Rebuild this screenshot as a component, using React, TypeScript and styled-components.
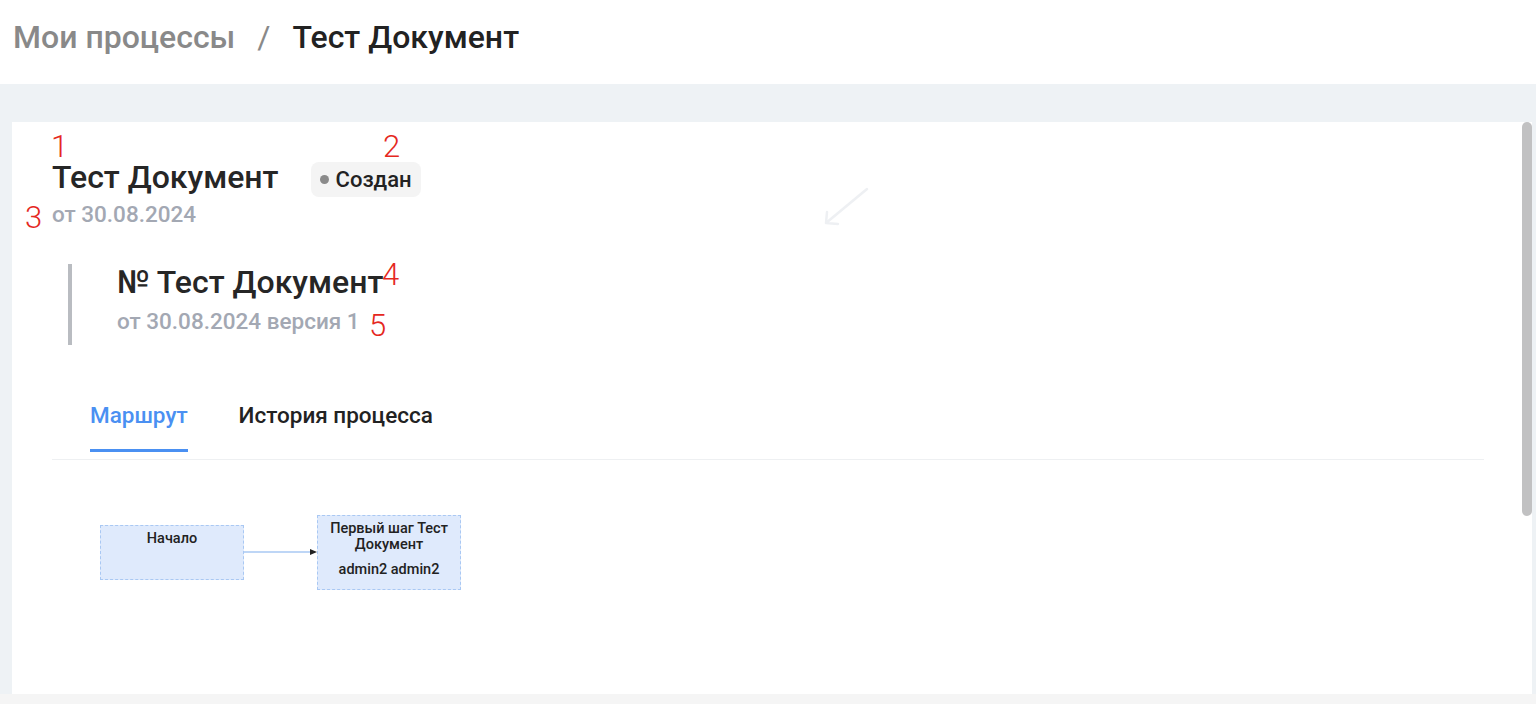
import * as React from 'react'
import styled, { createGlobalStyle } from 'styled-components'

const GlobalStyle = createGlobalStyle`
  html, body {
    margin: 0;
    padding: 0;
    height: 100%;
    overflow: hidden;
  }
  body {
    font-family: Roboto, 'Noto Sans', sans-serif;
    background: #ffffff;
    color: #222222;
  }
`

const Page = styled.div`
  display: flex;
  flex-direction: column;
  height: 704px;
  width: 1536px;
`

const Header = styled.header`
  height: 84px;
  flex-shrink: 0;
  background: #ffffff;
  display: flex;
  align-items: flex-start;
  padding: 18px 0 0 13px;
  box-sizing: border-box;
  font-size: 32px;
  line-height: 38px;
  font-weight: 500;
`

const Crumb = styled.span<{ $current?: boolean }>`
  color: ${(p) => (p.$current ? '#222222' : '#898989')};
`

const Slash = styled.span`
  color: #898989;
  margin: 0 22px;
  font-weight: 400;
`

const Main = styled.main`
  flex: 1;
  background: #eef2f5;
  padding: 38px 4px 0 12px;
  display: flex;
  min-height: 0;
`

const BottomStrip = styled.div`
  height: 10px;
  flex-shrink: 0;
  background: #f5f5f5;
`

const Card = styled.section`
  position: relative;
  flex: 1;
  background: #ffffff;
  padding: 37px 48px 0 40px;
  overflow: hidden;
`

const Scrollbar = styled.div`
  position: absolute;
  top: 0;
  right: 0;
  width: 10px;
  height: 394px;
  border-radius: 5px;
  background: #c1c1c2;
`

const Note = styled.span<{ $x: number; $y: number }>`
  position: absolute;
  left: ${(p) => p.$x}px;
  top: ${(p) => p.$y}px;
  font-size: 31px;
  line-height: 31px;
  font-weight: 300;
  color: #e5281e;
`

const GhostArrow = styled.svg`
  position: absolute;
  left: 799px;
  top: 64px;
`

const TitleRow = styled.div`
  display: flex;
  align-items: center;
  gap: 32px;
  height: 36px;
`

const Title = styled.h1`
  margin: 0;
  font-size: 32px;
  line-height: 36px;
  font-weight: 500;
  color: #262626;
`

const Badge = styled.span`
  display: inline-flex;
  align-items: center;
  gap: 7px;
  height: 35px;
  margin-top: 4px;
  padding: 0 9px;
  border-radius: 8px;
  background: #f4f4f4;
  font-size: 22px;
  font-weight: 500;
  color: #222222;
`

const Dot = styled.span`
  width: 9px;
  height: 9px;
  border-radius: 50%;
  background: #8a8a8a;
`

const Sub = styled.div<{ $gap?: number }>`
  margin-top: ${(p) => p.$gap ?? 0}px;
  font-size: 22.5px;
  line-height: 26px;
  font-weight: 500;
  color: #a3a8b3;
`

const DocBlock = styled.div`
  margin: 38px 0 0 16px;
  border-left: 4px solid #b9bcc1;
  padding: 0 0 0 45px;
  height: 81px;
  box-sizing: border-box;
`

const DocTitle = styled.h2`
  margin: -1px 0 0;
  font-size: 32px;
  line-height: 36px;
  font-weight: 500;
  color: #262626;
`

const Tabs = styled.nav`
  display: flex;
  gap: 51px;
  margin-top: 57px;
  padding-left: 38px;
  border-bottom: 1px solid #eef0f2;
`

const Tab = styled.div<{ $active?: boolean }>`
  font-size: 22.5px;
  line-height: 27px;
  font-weight: 500;
  padding: 0 0 20px;
  margin-bottom: 7px;
  color: ${(p) => (p.$active ? '#4a90f2' : '#222222')};
  border-bottom: 3px solid ${(p) => (p.$active ? '#4a90f2' : 'transparent')};
`

const Canvas = styled.div`
  position: relative;
  height: 200px;
`

const Node = styled.div<{ $x: number; $y: number; $h: number }>`
  position: absolute;
  left: ${(p) => p.$x}px;
  top: ${(p) => p.$y}px;
  width: 144px;
  height: ${(p) => p.$h}px;
  box-sizing: border-box;
  background: #dfeafc;
  border: 1px dashed #a9c8f3;
  padding-top: 5px;
  text-align: center;
  font-size: 14.5px;
  line-height: 16px;
  font-weight: 500;
  color: #222222;
`

const NodeLine = styled.div<{ $gap?: number }>`
  margin-top: ${(p) => p.$gap ?? 0}px;
`

const Edge = styled.svg`
  position: absolute;
  left: 192px;
  top: 86px;
`

export default function App() {
  return (
    <Page>
      <GlobalStyle />
      <Header>
        <Crumb>Мои процессы</Crumb>
        <Slash>/</Slash>
        <Crumb $current>Тест Документ</Crumb>
      </Header>
      <Main>
        <Card>
          <TitleRow>
            <Title>Тест Документ</Title>
            <Badge>
              <Dot />
              Создан
            </Badge>
          </TitleRow>
          <Sub $gap={6}>от 30.08.2024</Sub>

          <DocBlock>
            <DocTitle>№ Тест Документ</DocTitle>
            <Sub $gap={8}>от 30.08.2024 версия 1</Sub>
          </DocBlock>

          <Tabs>
            <Tab $active>Маршрут</Tab>
            <Tab>История процесса</Tab>
          </Tabs>

          <Canvas>
            <Node $x={48} $y={65} $h={55}>
              <NodeLine>Начало</NodeLine>
            </Node>
            <Edge width="74" height="12" viewBox="0 0 74 12">
              <line x1="0" y1="6" x2="68" y2="6" stroke="#a9c8f3" strokeWidth="1.5" />
              <path d="M66 3 L73 6 L66 9 Z" fill="#222" />
            </Edge>
            <Node $x={265} $y={55} $h={75}>
              <NodeLine>Первый шаг Тест</NodeLine>
              <NodeLine>Документ</NodeLine>
              <NodeLine $gap={9}>admin2 admin2</NodeLine>
            </Node>
          </Canvas>

          <GhostArrow width="60" height="44" viewBox="0 0 60 44">
            <path d="M56 3 L15 37 M15 37 L16 26 M15 37 L27 38" stroke="#eef0f3" strokeWidth="2.5" fill="none" strokeLinecap="round" />
          </GhostArrow>

          <Note $x={39} $y={9}>1</Note>
          <Note $x={371} $y={9}>2</Note>
          <Note $x={13} $y={80}>3</Note>
          <Note $x={370} $y={137}>4</Note>
          <Note $x={357} $y={188}>5</Note>

          <Scrollbar />
        </Card>
      </Main>
      <BottomStrip />
    </Page>
  )
}
